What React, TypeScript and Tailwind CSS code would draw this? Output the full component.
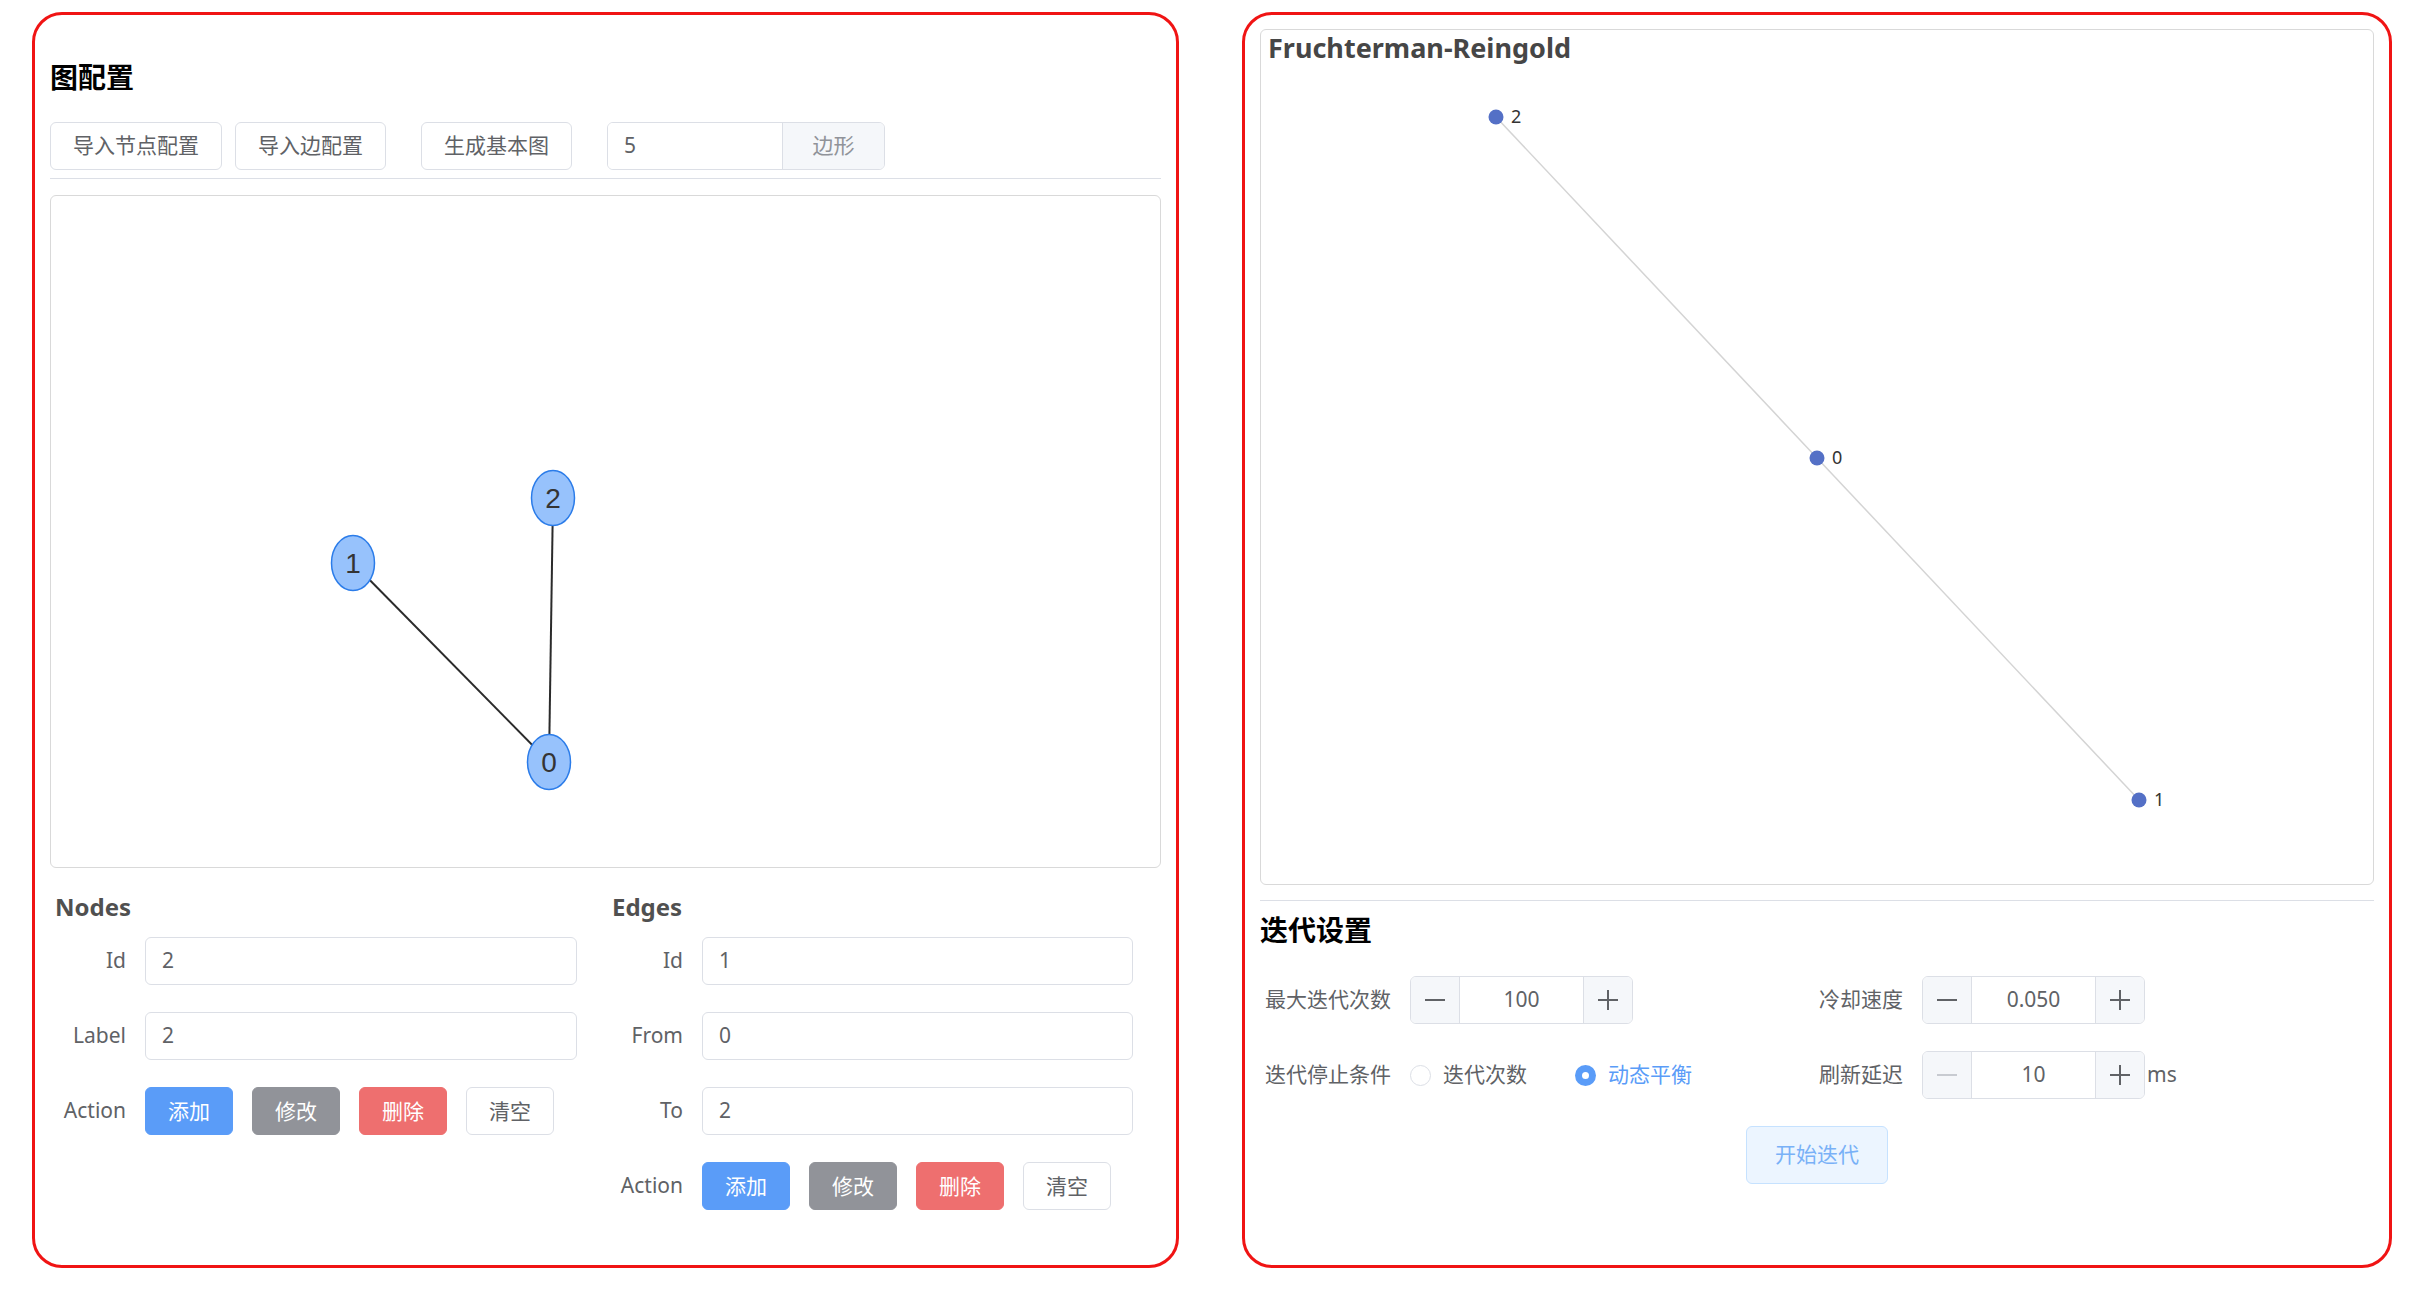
const FONT = "font-['Noto_Sans','Noto_Sans_CJK_SC',sans-serif]"

function Btn({ children, kind }: { children: string; kind: 'primary' | 'info' | 'danger' | 'plain' }) {
  const color =
    kind === 'primary'
      ? 'bg-[#5a9cf8] border-[#5a9cf8] text-white'
      : kind === 'info'
        ? 'bg-[#919399] border-[#919399] text-white'
        : kind === 'danger'
          ? 'bg-[#ee6f6f] border-[#ee6f6f] text-white'
          : 'bg-white border-[#dcdfe6] text-[#606266]'
  return (
    <button className={`h-[48px] w-[88px] shrink-0 rounded-[6px] border text-[21px] leading-none ${color}`}>
      {children}
    </button>
  )
}

function TextInput({ value }: { value: string }) {
  return (
    <div className="h-[48px] w-full rounded-[6px] border border-[#dcdfe6] bg-white px-[16px] flex items-center text-[21px] text-[#606266]">
      {value}
    </div>
  )
}

function FormRow({ label, children }: { label: string; children: React.ReactNode }) {
  return (
    <div className="flex items-center h-[48px]">
      <div className="w-[95px] shrink-0 pr-[19px] text-right text-[21px] text-[#606266]">{label}</div>
      <div className="flex-1 flex items-center gap-[19px]">{children}</div>
    </div>
  )
}

function Actions() {
  return (
    <>
      <Btn kind="primary">添加</Btn>
      <Btn kind="info">修改</Btn>
      <Btn kind="danger">删除</Btn>
      <Btn kind="plain">清空</Btn>
    </>
  )
}

function ConfigGraph() {
  const nodes = [
    { id: '1', x: 302, y: 367 },
    { id: '2', x: 502, y: 302 },
    { id: '0', x: 498, y: 566 },
  ]
  return (
    <svg width="1111" height="671" className="block">
      <line x1={302} y1={367} x2={498} y2={566} stroke="#2b2b2b" strokeWidth="2" />
      <line x1={502} y1={302} x2={498} y2={566} stroke="#2b2b2b" strokeWidth="2" />
      {nodes.map(n => (
        <g key={n.id}>
          <ellipse cx={n.x} cy={n.y} rx={21.5} ry={27.5} fill="#97c2fc" stroke="#2b7ce9" strokeWidth="1.5" />
          <text
            x={n.x}
            y={n.y + 10}
            textAnchor="middle"
            fontSize="28"
            fill="#343434"
            fontFamily="'Liberation Sans', Arial, sans-serif"
          >
            {n.id}
          </text>
        </g>
      ))}
    </svg>
  )
}

function LayoutGraph() {
  const nodes = [
    { id: '2', x: 235, y: 87 },
    { id: '0', x: 556, y: 428 },
    { id: '1', x: 878, y: 770 },
  ]
  return (
    <svg width="1112" height="854" className="absolute left-0 top-0">
      <line x1={235} y1={87} x2={556} y2={428} stroke="#d4d4d4" strokeWidth="1.5" />
      <line x1={556} y1={428} x2={878} y2={770} stroke="#d4d4d4" strokeWidth="1.5" />
      {nodes.map(n => (
        <g key={n.id}>
          <circle cx={n.x} cy={n.y} r={7.5} fill="#5470c6" />
          <text x={n.x + 15} y={n.y + 6} fontSize="18" fill="#333" fontFamily="'Noto Sans', sans-serif">
            {n.id}
          </text>
        </g>
      ))}
    </svg>
  )
}

function Stepper({ value, minusDisabled }: { value: string; minusDisabled?: boolean }) {
  return (
    <div className="flex h-[48px] w-[223px] rounded-[6px] border border-[#dcdfe6] overflow-hidden">
      <div className="w-[49px] bg-[#f5f7fa] border-r border-[#dcdfe6] flex items-center justify-center">
        <div className={`w-[20px] h-[1.5px] ${minusDisabled ? 'bg-[#c8cbd1]' : 'bg-[#606266]'}`} />
      </div>
      <div className="flex-1 bg-white flex items-center justify-center text-[21px] text-[#606266]">{value}</div>
      <div className="w-[49px] bg-[#f5f7fa] border-l border-[#dcdfe6] flex items-center justify-center relative">
        <div className="w-[20px] h-[1.5px] bg-[#606266]" />
        <div className="absolute w-[1.5px] h-[20px] bg-[#606266]" />
      </div>
    </div>
  )
}

function Radio({ label, checked }: { label: string; checked?: boolean }) {
  return (
    <div className="flex items-center">
      {checked ? (
        <div className="w-[21px] h-[21px] rounded-full bg-[#5a9cf8] flex items-center justify-center">
          <div className="w-[7px] h-[7px] rounded-full bg-white" />
        </div>
      ) : (
        <div className="w-[21px] h-[21px] rounded-full border border-[#dcdfe6] bg-white" />
      )}
      <span className={`ml-[12px] text-[21px] ${checked ? 'text-[#5a9cf8]' : 'text-[#606266]'}`}>{label}</span>
    </div>
  )
}

export default function App() {
  return (
    <div className={`${FONT} bg-white w-[2410px] h-[1298px] flex gap-[63px] pl-[32px] pt-[12px]`}>
      {/* left panel */}
      <div className="w-[1147px] h-[1256px] border-[3px] border-[#f01414] rounded-[30px] px-[15px] pt-[44px]">
        <h3 className="text-[28px] leading-[36px] font-bold text-black">图配置</h3>
        <div className="mt-[27px] flex items-center text-[21px] text-[#606266]">
          <button className="h-[48px] px-[22px] rounded-[6px] border border-[#dcdfe6] bg-white">导入节点配置</button>
          <button className="ml-[13px] h-[48px] px-[22px] rounded-[6px] border border-[#dcdfe6] bg-white">导入边配置</button>
          <button className="ml-[35px] h-[48px] px-[22px] rounded-[6px] border border-[#dcdfe6] bg-white">生成基本图</button>
          <div className="ml-[35px] flex h-[48px] w-[278px] rounded-[6px] border border-[#dcdfe6] overflow-hidden">
            <div className="flex-1 bg-white px-[16px] flex items-center">5</div>
            <div className="w-[102px] bg-[#f5f7fa] border-l border-[#dcdfe6] flex items-center justify-center text-[#909399]">
              边形
            </div>
          </div>
        </div>
        <div className="mt-[8px] h-px bg-[#dcdfe6]" />
        <div className="mt-[16px] h-[673px] rounded-[6px] border border-[#d9d9d9] overflow-hidden">
          <ConfigGraph />
        </div>

        <div className="mt-[23px] grid grid-cols-[527px_526px] gap-x-[30px]">
          <div>
            <h4 className="pl-[5px] text-[24px] leading-[32px] font-bold text-[#505050]">Nodes</h4>
            <div className="mt-[14px] flex flex-col gap-[27px]">
              <FormRow label="Id">
                <TextInput value="2" />
              </FormRow>
              <FormRow label="Label">
                <TextInput value="2" />
              </FormRow>
              <FormRow label="Action">
                <Actions />
              </FormRow>
            </div>
          </div>
          <div>
            <h4 className="pl-[5px] text-[24px] leading-[32px] font-bold text-[#505050]">Edges</h4>
            <div className="mt-[14px] flex flex-col gap-[27px]">
              <FormRow label="Id">
                <TextInput value="1" />
              </FormRow>
              <FormRow label="From">
                <TextInput value="0" />
              </FormRow>
              <FormRow label="To">
                <TextInput value="2" />
              </FormRow>
              <FormRow label="Action">
                <Actions />
              </FormRow>
            </div>
          </div>
        </div>
      </div>

      {/* right panel */}
      <div className="w-[1150px] h-[1256px] border-[3px] border-[#f01414] rounded-[30px] px-[15px] pt-[14px]">
        <div className="relative h-[856px] rounded-[6px] border border-[#d9d9d9] overflow-hidden">
          <div className="absolute left-[7px] top-[1px] text-[27px] leading-[34px] font-bold text-[#464646]">
            Fruchterman-Reingold
          </div>
          <LayoutGraph />
        </div>
        <div className="mt-[15px] h-px bg-[#dcdfe6]" />
        <h3 className="mt-[11px] text-[28px] leading-[36px] font-bold text-black">迭代设置</h3>

        <div className="mt-[28px] grid grid-cols-2 gap-y-[27px] text-[21px] text-[#606266]">
          <div className="flex items-center h-[48px] pl-[5px]">
            <span className="mr-[19px]">最大迭代次数</span>
            <Stepper value="100" />
          </div>
          <div className="flex items-center h-[48px] pl-[2px]">
            <span className="mr-[19px]">冷却速度</span>
            <Stepper value="0.050" />
          </div>
          <div className="flex items-center h-[48px] pl-[5px]">
            <span className="mr-[19px]">迭代停止条件</span>
            <Radio label="迭代次数" />
            <div className="ml-[48px]">
              <Radio label="动态平衡" checked />
            </div>
          </div>
          <div className="flex items-center h-[48px] pl-[2px]">
            <span className="mr-[19px]">刷新延迟</span>
            <Stepper value="10" minusDisabled />
            <span className="ml-[2px]">ms</span>
          </div>
        </div>

        <div className="mt-[27px] flex justify-center">
          <button className="h-[58px] px-[28px] rounded-[6px] border border-[#c6e2ff] bg-[#ecf5ff] text-[21px] text-[#79b1f7]">
            开始迭代
          </button>
        </div>
      </div>
    </div>
  )
}
